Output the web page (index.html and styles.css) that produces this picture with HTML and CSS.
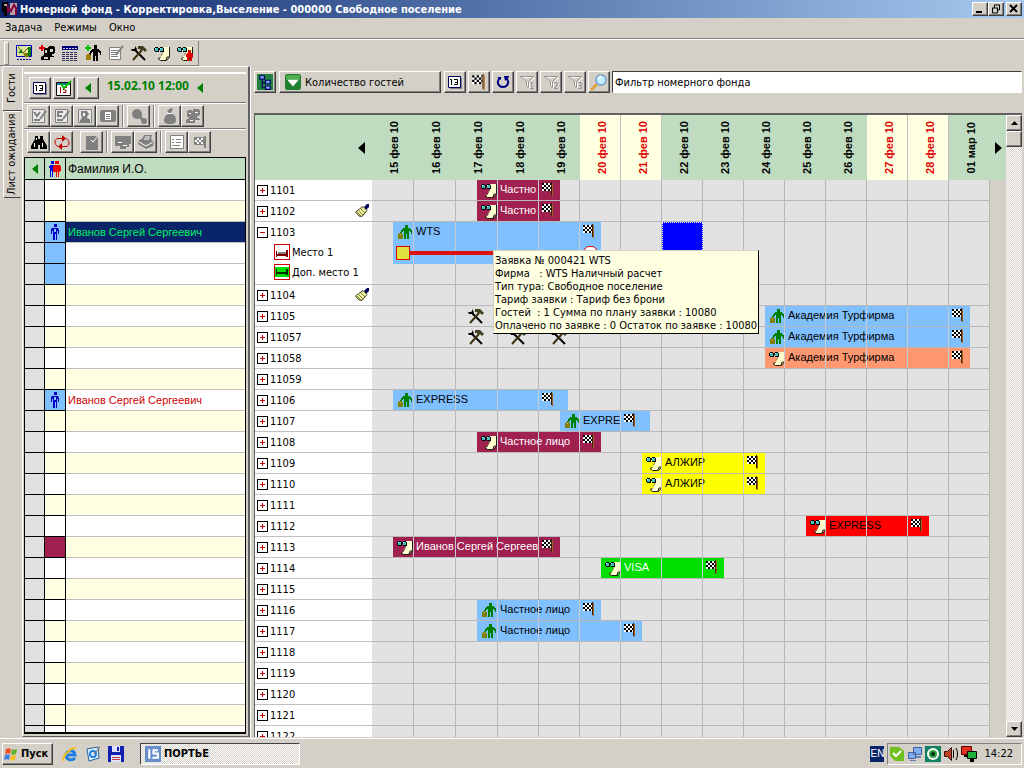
FILE: index.html
```html
<!DOCTYPE html>
<html lang="ru">
  <head>
    <meta charset="UTF-8" />
    <meta name="viewport" content="width=device-width, initial-scale=1.0" />
    <title>Номерной фонд</title>
    <link rel="stylesheet" href="styles.css">
  </head>
  <body>
    <svg class="sprite" width="0" height="0" aria-hidden="true">
      <symbol id="i-man" viewBox="0 0 16 16">
        <path fill="#008000" d="M8 1h3v3H8zM6 4h7v1h1v1h1v4h-1V8h-1V7h-1v8h-2v-5H9v5H7V7H6v1H5v2H3V8h1V6h1V5h1z" />
        <path fill="#808000" d="M1 10h1V9h3v1h1v5H1z" />
        <path fill="#c0c080" d="M3 10h1v1H3z" />
      </symbol>
      <symbol id="i-manadd" viewBox="0 0 16 16">
        <path fill="#000" d="M9 0h3v4H9zM7 4h7v1h1v1h1v4h-1V8h-1V7h-1v9h-2v-5h-1v5H8V7H7v1H6v2H4V8h1V6h1V5h1z" />
        <path fill="#00c000" d="M2 0h2v2h2v2H4v2H2V4H0V2h2z" />
        <path fill="#a08000" d="M1 10h1V9h3v1h1v5H1z" />
      </symbol>
      <symbol id="i-doc" viewBox="0 0 16 16">
        <path fill="#ffffd0" d="M8 2h7v10l-3 3H6l-2-2 3-1 2-4z" />
        <path fill="none" stroke="#202010" d="M15.500 2v10l-3 3.500h-6L4 13.500l2.500-1M12 15l1-3h2" />
        <path fill="none" stroke="#808060" d="M9 7.500l-2 3" />
        <path fill="#000" d="M1 2h3v1h2V2h3v1h1v4H6V5H5v2H1V6H0V3h1z" />
        <path fill="#40c0c0" d="M1 3h3v3H1zM6 3h3v3H6z" />
        <path fill="#c0ffff" d="M1 3h1v1H1zM6 3h1v1H6z" />
      </symbol>
      <symbol id="i-docman" viewBox="0 0 16 16">
        <use href="#i-doc" width="16" height="16" />
        <path fill="#e00000" d="M11 5h3v3h1v1h1v3h-1v4h-2v-3h-1v3h-2v-4H9V9h1V8h1z" />
      </symbol>
      <symbol id="i-flag" viewBox="0 0 12 14">
        <path fill="#fff" d="M0 1h9v8H0z" />
        <path fill="#000" d="M0 1h2v2H0zM4 1h2v2H4zM8 1h1v2H8zM2 3h2v2H2zM6 3h2v2H6zM0 5h2v2H0zM4 5h2v2H4zM8 5h1v2H8zM2 7h2v2H2zM6 7h2v2H6z" />
        <path fill="#402000" d="M9 0h1v13H9z" />
        <path fill="#a06020" d="M10 1h1v13h-1z" />
      </symbol>
      <symbol id="i-tools" viewBox="0 0 16 16">
        <path stroke="#000" stroke-width="2" d="M3 4l11 11" />
        <path stroke="#403010" stroke-width="2" d="M2 15L11 5" />
        <path fill="#404020" d="M7 1h5l4 4-2 2-2-2-2 1-1-2H7z" />
        <path fill="#000" d="M0 4l1 2h4l1-2-2-3v3H2z" />
      </symbol>
      <symbol id="i-brush" viewBox="0 0 16 16">
        <path fill="#000060" d="M10 4l3-3h2v3l-3 3z" />
        <path fill="#f0f0a0" stroke="#404020" d="M9 3.500l4 4-5 6-3-.5L1.500 9z" />
        <path stroke="#808040" d="M3 9l4 4M5 8l4 4M7 6l4 4" />
      </symbol>
      <symbol id="i-note" viewBox="0 0 16 16">
        <path fill="#fff" stroke="#808080" d="M1.500 2.500h11v12h-11z" />
        <path stroke="#808080" d="M3 5.500h7M3 7.500h6M3 9.500h5M3 11.500h7" />
        <path stroke="#808080" stroke-width="2" d="M15 1L8 10" />
      </symbol>
      <symbol id="i-notev" viewBox="0 0 16 16">
        <path fill="#e8e8e8" stroke="#808080" d="M1.500 1.500h12v13h-12z" />
        <path fill="none" stroke="#808080" stroke-width="2" d="M3 4l3 4 3-4M3 12h6M15 3l-6 8" />
      </symbol>
      <symbol id="i-notec" viewBox="0 0 16 16">
        <path fill="#e8e8e8" stroke="#808080" d="M1.500 1.500h12v13h-12z" />
        <path fill="none" stroke="#808080" stroke-width="2" d="M9 4H4v4h4M3 12h6M15 3l-6 8" />
      </symbol>
      <symbol id="i-cal" viewBox="0 0 16 16">
        <path fill="#808080" d="M3 4h12v11H3z" />
        <path fill="#fff" stroke="#000060" d="M1.500 2.500h12v11h-12z" />
        <path stroke="#000" fill="none" d="M3 5.500h1.500V11M7 5.500h3.500v5H7M8 8.500h2" />
      </symbol>
      <symbol id="i-calred" viewBox="0 0 18 18">
        <path fill="#fff" stroke="#000" d="M1.500 3.500h14v13h-14z" />
        <path fill="#008080" d="M2 4h13v2H2z" />
        <path stroke="#a00000" fill="none" d="M5.500 8v6M12 8.500H8.500V11H11v2.500H8" />
        <path stroke="#00c000" stroke-width="2" fill="none" d="M6 5l3 4 7-7" />
      </symbol>
      <symbol id="i-left" viewBox="0 0 6 10"><path fill="#008000" d="M6 0v10L0 5z" /></symbol>
      <symbol id="i-people" viewBox="0 0 16 16">
        <path fill="#808080" d="M3 2h4v1h1V1h6v1h1v5h-1v1h-2v2h2v1h1v1h-5v3H1v-3l3-2V9H2V3h1z" />
        <path fill="#fff" d="M4 5h2v1H4zM10 4h3v1h-3zM5 12h3v1H5z" />
      </symbol>
      <symbol id="i-peopleadd" viewBox="0 0 16 16">
        <path fill="#000" d="M5 3h4V2h1V1h5v1h1v6h-1v1h-2v2h2v1h-4v3H2v-3l3-2z" />
        <path fill="#d4d0c8" d="M6 5h2v3H6zM11 4h3v3h-3zM5 12h4v2H5z" />
        <path fill="#e00000" d="M2 0h2v2h2v2H4v2H2V4H0V2h2z" />
      </symbol>
      <symbol id="i-face" viewBox="0 0 16 16">
        <path fill="#e8e8e8" stroke="#808080" d="M1.500 1.500h13v13h-13z" />
        <path fill="#808080" d="M4 3h6l2 3-2 3v1l3 1v3H3v-2l2-2-1-3z" />
        <path fill="#fff" d="M6 5h2v3H6z" />
      </symbol>
      <symbol id="i-card" viewBox="0 0 16 14">
        <rect x="0" y="1" width="16" height="12" rx="2" fill="#808080" />
        <path fill="#fff" d="M5 3h6v8H5z" />
        <path stroke="#808080" d="M6 5.500h4M6 7.500h4M6 9.500h4" />
      </symbol>
      <symbol id="i-key" viewBox="0 0 16 16">
        <circle cx="6" cy="6" r="5" fill="#808080" />
        <path stroke="#808080" stroke-width="3" d="M8 8l4 4" />
        <circle cx="13" cy="13" r="3" fill="#808080" />
      </symbol>
      <symbol id="i-bag" viewBox="0 0 16 16">
        <path fill="#808080" d="M9 0l2 1-2 4c4 2 5 4 5 7s-2 4-6 4-6-1-6-4 2-5 5-7L5 3z" />
        <path stroke="#fff" d="M5 5.500h5" />
      </symbol>
      <symbol id="i-bino" viewBox="0 0 16 16">
        <path fill="#000" d="M4 2h3v3h2V2h3v3l4 7v3H9v-4H7v4H0v-3l4-7z" />
        <path fill="#fff" d="M3 9h1v4H3zM11 9h1v4h-1zM5 4h1v2H5z" />
      </symbol>
      <symbol id="i-loop" viewBox="0 0 16 16">
        <path fill="none" stroke="#c00000" d="M4 12.500C0 11 0 4.500 4 4.500h5M12 4.500c4 1 4 8 0 8H7" />
        <path fill="#c00000" d="M8 1l4 3.500L8 8zM8 9l-4 3.500L8 16z" />
      </symbol>
      <symbol id="i-check" viewBox="0 0 16 16">
        <path fill="#808080" d="M2 2h12v14H2z" />
        <path fill="none" stroke="#fff" d="M7 6l2 2 5-6" />
      </symbol>
      <symbol id="i-pay" viewBox="0 0 16 16">
        <path fill="#808080" d="M0 2h16v8h-2v3h-3v2H5v-3H0z" />
        <path stroke="#fff" d="M3 8.500h4M8 11.500h4" />
      </symbol>
      <symbol id="i-print" viewBox="0 0 16 16">
        <path fill="#808080" d="M6 1h8l-1 4 3 3-1 4-7 3-8-5 1-4 3-1z" />
        <path stroke="#fff" fill="none" d="M7 3h5M6 5h5M1 8l7 4 7-4" />
      </symbol>
      <symbol id="i-form" viewBox="0 0 16 16">
        <path fill="#fff" stroke="#808080" d="M1.500 1.500h13v13h-13z" />
        <path stroke="#808080" d="M3 5.500h2M7 5.500h5M3 8.500h2M7 8.500h5M3 11.500h8" />
      </symbol>
      <symbol id="i-flaggray" viewBox="0 0 16 16">
        <path fill="#fff" stroke="#808080" d="M2.500 3.500h9v7h-9z" />
        <path fill="#808080" d="M3 4h2v2H3zM7 4h2v2H7zM5 6h2v2H5zM9 6h2v2H9zM3 8h2v2H3zM7 8h2v2H7zM12 2h2v12h-2z" />
      </symbol>
      <symbol id="i-funnel" viewBox="0 0 14 14">
        <path fill="none" stroke="#fff" d="M1.500 2.500h13l-5 5v6l-2-2v-4z" />
        <path fill="none" stroke="#909090" d="M.5 1.500h13l-5 5v6l-2-2v-4z" />
      </symbol>
      <symbol id="i-shade" viewBox="0 0 16 16">
        <path fill="#e0e0a0" stroke="#0000c0" d="M.5.500h15v11H.5z" />
        <path stroke="#606000" d="M2 2l5 6 5-5" fill="none" />
        <path fill="#808000" d="M7 8h6v4H9z" />
        <path fill="#008000" d="M12 2h3v9h-3zM2 8l4-4v4z" />
        <path stroke="#000080" stroke-dasharray="2 1" d="M1 14.500h14" />
      </symbol>
      <symbol id="i-table" viewBox="0 0 16 16">
        <path fill="#000080" d="M0 1h16v4H0z" />
        <path stroke="#d4d0c8" stroke-dasharray="2 1" d="M1 3.500h14" />
        <path stroke="#303060" stroke-dasharray="3 1" d="M0 7.500h16M0 9.500h16M0 11.500h16M0 13.500h16M0 15.500h16" />
      </symbol>
      <symbol id="i-pair" viewBox="0 0 14 16">
        <path fill="#0000e0" d="M3 0h3v3H3zM2 4h4v5H5v7H4v-6H3v6H2V7H1V5h1z" />
        <path fill="#f00000" d="M7 0h4v3H7zM6 4h6l1 2v4h-1v1h-1v5h-1v-5H9v5H8v-5H5V6z" />
      </symbol>
      <symbol id="i-guest" viewBox="0 0 10 16">
        <path fill="#0000c0" d="M4 0h3v3H4zM2 4h6l1 2v4H8V7H7v9H6v-6H5v6H3V7H2v3H1V5z" />
        <path fill="#80c0ff" d="M4 5h2v3H4z" />
      </symbol>
      <symbol id="i-tree" viewBox="0 0 14 14">
        <path fill="#208040" d="M0 0h14v14H0z" />
        <path fill="#80b0ff" stroke="#000060" d="M2.500 1.500h4v3h-4zM7.500 5.500h4v3h-4zM7.500 10.500h4v3h-4z" />
        <path fill="none" stroke="#000060" d="M4.500 5v7h3M4.500 7.500h3" />
      </symbol>
      <symbol id="i-drop" viewBox="0 0 14 14">
        <rect width="14" height="14" rx="2" fill="#208030" />
        <path fill="#50b050" d="M1 1h12v4H1z" />
        <path fill="#fff" d="M2 5h10l-5 6z" />
      </symbol>
      <symbol id="i-turn" viewBox="0 0 16 16">
        <path fill="none" stroke="#000080" stroke-width="2" d="M5 4c-4 3-2 9 3 9s7-6 3-9" />
        <path fill="#000080" d="M9 2h5v1l-4 4zM2 3h4v3z" />
      </symbol>
      <symbol id="i-lens" viewBox="0 0 18 18">
        <path stroke="#e0a040" stroke-width="3" d="M1 17l6-6" />
        <circle cx="11" cy="7" r="5" fill="#c0f0ff" stroke="#80a8d0" stroke-width="2" />
        <path d="M8 6l3-3" stroke="#fff" stroke-width="2" />
      </symbol>
      <symbol id="i-app" viewBox="0 0 16 16">
        <path fill="#000" d="M0 1h6v4H4v2h3v4H5v4H2v-4H0z" />
        <path fill="#c0a0a0" d="M2 3h3v2H2zM8 2h7v12H8z" />
        <path fill="none" stroke="#800040" stroke-width="2" d="M6 12V6l3 4 3-6 2 3v7" />
      </symbol>
      <symbol id="i-bed" viewBox="0 0 14 10">
        <path fill="#800000" d="M1 4h1v3h9V3h2v7h-2V9H2v1H1z" />
        <path fill="#808080" d="M3 5h8v2H3z" />
      </symbol>
      <symbol id="i-addbed" viewBox="0 0 14 10">
        <path fill="#00e000" d="M0 0h14v10H0z" />
        <path fill="#003000" d="M1 2h1v3h9V2h2v6h-2V7H2v1H1z" />
      </symbol>
      <symbol id="i-win" viewBox="0 0 16 16">
        <path fill="#f05020" d="M3 3c2-1 3-1 5 0L7 8C5 7 4 7 2 8z" />
        <path fill="#60b030" d="M9 3c2 1 3 1 5 0l-1 5c-2 1-3 1-5 0z" />
        <path fill="#4080e0" d="M2 9c2-1 3-1 5 0l-1 5c-2-1-3-1-5 0z" />
        <path fill="#f8c020" d="M8 9c2 1 3 1 5 0l-1 5c-2 1-3 1-5 0z" />
      </symbol>
      <symbol id="i-ie" viewBox="0 0 16 16">
        <path fill="none" stroke="#2080e0" stroke-width="3" d="M13 12c-3 3-9 2-9-3s8-6 9 0H5" />
        <path fill="none" stroke="#f0c020" stroke-width="2" d="M2 15C-1 12 8 1 14 2" />
      </symbol>
      <symbol id="i-desk" viewBox="0 0 16 16">
        <path fill="#e0f0ff" stroke="#2060a0" d="M2 3l11-2 1 11-10 3z" />
        <circle cx="8" cy="8" r="3" fill="none" stroke="#2080e0" stroke-width="2" />
        <path stroke="#806040" d="M9 8l6-7" />
      </symbol>
      <symbol id="i-floppy" viewBox="0 0 16 16">
        <path fill="#1020b0" d="M0 0h16v16H0z" />
        <path fill="#e0e0ff" d="M4 0h8v6H4zM3 9h10v7H3z" />
        <path fill="#1020b0" d="M9 1h2v4H9z" />
        <path stroke="#c04040" d="M4 11.500h8M4 13.500h8" />
      </symbol>
      <symbol id="i-portier" viewBox="0 0 15 15">
        <path fill="#6890c8" d="M0 0h15v15H0z" />
        <path fill="none" stroke="#fff" stroke-width="2" d="M4 3v9M12 4H8v3h4v4H7" />
      </symbol>
      <symbol id="i-skype" viewBox="0 0 16 16">
        <path fill="#70c020" d="M1 1h9l5 4v10H6l-5-5z" />
        <path fill="none" stroke="#fff" stroke-width="2" d="M4 7l3 3 5-5" />
      </symbol>
      <symbol id="i-net" viewBox="0 0 16 16">
        <path fill="#80b0f0" stroke="#4060a0" d="M6.500 1.500h8v7h-8zM1.500 6.500h7v6h-7z" />
        <path fill="#6080b0" d="M9 10h5v2H9zM3 14h6v1H3z" />
      </symbol>
      <symbol id="i-eye" viewBox="0 0 16 16">
        <path fill="#108060" d="M0 0h16v16H0z" />
        <circle cx="8" cy="8" r="6" fill="#fff" />
        <circle cx="8" cy="8" r="4" fill="#30a040" />
        <circle cx="8" cy="8" r="2" fill="#003020" />
      </symbol>
      <symbol id="i-sound" viewBox="0 0 14 16">
        <path fill="#c04020" stroke="#301010" d="M.5 5.500h3l4-4v13l-4-4h-3z" />
        <path fill="none" stroke="#000" d="M9.500 4v8M12 2c2 3 2 9 0 12" />
      </symbol>
      <symbol id="i-screens" viewBox="0 0 16 16">
        <path fill="#e03020" stroke="#600" d="M.5.500h10v8H.5z" />
        <path fill="#20b040" stroke="#000" d="M6.500 5.500h9v7h-9z" />
        <path fill="#000" d="M9 13h4v3H9zM3 9h3v2H3z" />
      </symbol>
    </svg>

    <header class="titlebar">
      <svg class="ico"><use href="#i-app" /></svg>
      <h1>Номерной фонд - Корректировка,Выселение - 000000 Свободное поселение</h1>
      <div class="winbtns">
        <button class="btn" aria-label="Свернуть"><svg viewBox="0 0 12 10"><path fill="#000" d="M2 7h6v2H2z" /></svg></button>
        <button class="btn" aria-label="Восстановить"><svg viewBox="0 0 12 10"><path fill="none" stroke="#000" d="M4 1h6M4.500 1v3M9.500 1v5H8M2 4h6M2.500 4v5h5V4" /></svg></button>
        <button class="btn close" aria-label="Закрыть"><svg viewBox="0 0 12 10"><path stroke="#000" stroke-width="2" d="M2 1l7 7M9 1L2 8" /></svg></button>
      </div>
    </header>

    <nav class="menu">
      <button>Задача</button>
      <button>Режимы</button>
      <button>Окно</button>
    </nav>

    <div class="toolbar">
      <button aria-label="Шахматка"><svg class="ico"><use href="#i-shade" /></svg></button>
      <button aria-label="Новая группа"><svg class="ico"><use href="#i-peopleadd" /></svg></button>
      <button aria-label="Таблица"><svg class="ico"><use href="#i-table" /></svg></button>
      <button aria-label="Новый гость"><svg class="ico"><use href="#i-manadd" /></svg></button>
      <button aria-label="Правка"><svg class="ico"><use href="#i-note" /></svg></button>
      <button aria-label="Ремонт"><svg class="ico"><use href="#i-tools" /></svg></button>
      <button aria-label="Заявки"><svg class="ico"><use href="#i-doc" /></svg></button>
      <button aria-label="Заявки гостя"><svg class="ico"><use href="#i-docman" /></svg></button>
    </div>

    <main class="work">
      <div class="tabs">
        <button class="tab active">Гости</button>
        <button class="tab">Лист ожидания</button>
      </div>

      <section class="guests">
        <div class="tools first">
          <button class="btn" aria-label="Дата"><svg class="ico"><use href="#i-cal" /></svg></button>
          <button class="btn" aria-label="Сегодня"><svg class="ico big"><use href="#i-calred" /></svg></button>
          <button class="btn" aria-label="Назад"><svg class="arrow"><use href="#i-left" /></svg></button>
          <time class="now">15.02.10 12:00</time>
          <svg class="arrow"><use href="#i-left" /></svg>
        </div>
        <div class="tools">
          <button class="btn" aria-label="Въезд"><svg class="ico"><use href="#i-notev" /></svg></button>
          <button class="btn" aria-label="Счет"><svg class="ico"><use href="#i-notec" /></svg></button>
          <button class="btn" aria-label="Анкета"><svg class="ico"><use href="#i-face" /></svg></button>
          <button class="btn" aria-label="Карта"><svg class="ico"><use href="#i-card" /></svg></button>
          <i class="sep"></i>
          <button class="btn" aria-label="Ключ"><svg class="ico"><use href="#i-key" /></svg></button>
          <i class="sep"></i>
          <button class="btn" aria-label="Оплата"><svg class="ico"><use href="#i-bag" /></svg></button>
          <button class="btn" aria-label="Группа"><svg class="ico"><use href="#i-people" /></svg></button>
        </div>
        <div class="tools">
          <button class="btn" aria-label="Поиск"><svg class="ico"><use href="#i-bino" /></svg></button>
          <button class="btn" aria-label="Обновить"><svg class="ico"><use href="#i-loop" /></svg></button>
          <i class="space"></i>
          <button class="btn" aria-label="Отметить"><svg class="ico"><use href="#i-check" /></svg></button>
          <i class="sep"></i>
          <button class="btn" aria-label="Касса"><svg class="ico"><use href="#i-pay" /></svg></button>
          <button class="btn" aria-label="Печать"><svg class="ico"><use href="#i-print" /></svg></button>
          <i class="sep"></i>
          <button class="btn" aria-label="Бланк"><svg class="ico"><use href="#i-form" /></svg></button>
          <button class="btn" aria-label="Выезд"><svg class="ico"><use href="#i-flaggray" /></svg></button>
        </div>
        <div class="guestlist">
          <table>
            <thead>
              <tr>
                <th class="mark"><svg class="arrow"><use href="#i-left" /></svg></th>
                <th class="sex"><svg class="ico"><use href="#i-pair" /></svg></th>
                <th class="name">Фамилия И.О.</th>
              </tr>
            </thead>
            <tbody id="guestRows"></tbody>
          </table>
        </div>
      </section>

      <section class="fund">
        <div class="fundbar">
          <button class="btn" aria-label="Дерево"><svg class="ico"><use href="#i-tree" /></svg></button>
          <button class="btn mode"><svg class="ico"><use href="#i-drop" /></svg>Количество гостей</button>
          <button class="btn" aria-label="Дата"><svg class="ico"><use href="#i-cal" /></svg></button>
          <button class="btn" aria-label="Выезд"><svg class="ico"><use href="#i-flag" /></svg></button>
          <button class="btn" aria-label="Обновить"><svg class="ico"><use href="#i-turn" /></svg></button>
          <button class="btn funnel" aria-label="Фильтр 1"><svg class="ico"><use href="#i-funnel" /></svg><sub>1</sub></button>
          <button class="btn funnel" aria-label="Фильтр 2"><svg class="ico"><use href="#i-funnel" /></svg><sub>2</sub></button>
          <button class="btn funnel" aria-label="Фильтр 3"><svg class="ico"><use href="#i-funnel" /></svg><sub>3</sub></button>
          <button class="btn" aria-label="Найти"><svg class="ico big"><use href="#i-lens" /></svg></button>
          <input class="filter" type="text" aria-label="Фильтр" value="Фильтр номерного фонда" />
        </div>

        <div class="chart">
          <div class="plan">
            <div class="head">
              <div class="corner"><button aria-label="Раньше"><svg viewBox="0 0 7 12"><path d="M7 0v12L0 6z" /></svg></button></div>
              <div class="days" id="dates"></div>
              <div class="rest"><button aria-label="Позже"><svg viewBox="0 0 7 12"><path d="M0 0v12l7-6z" /></svg></button></div>
            </div>
            <div class="rooms" id="rooms"></div>
          </div>
          <div class="scroll">
            <button class="btn" aria-label="Вверх"><svg viewBox="0 0 7 4"><path d="M0 4h7L3.500 0z" /></svg></button>
            <div class="btn thumb"></div>
            <button class="btn down" aria-label="Вниз"><svg viewBox="0 0 7 4"><path d="M0 0h7L3.500 4z" /></svg></button>
          </div>
        </div>
      </section>
    </main>

    <footer class="taskbar">
      <button class="btn start"><svg class="ico"><use href="#i-win" /></svg>Пуск</button>
      <div class="quick">
        <svg class="ico"><use href="#i-ie" /></svg>
        <svg class="ico"><use href="#i-desk" /></svg>
        <svg class="ico"><use href="#i-floppy" /></svg>
      </div>
      <button class="task"><svg class="ico"><use href="#i-portier" /></svg>ПОРТЬЕ</button>
      <span class="lang">EN</span>
      <div class="tray">
        <svg class="ico"><use href="#i-skype" /></svg>
        <svg class="ico"><use href="#i-net" /></svg>
        <svg class="ico"><use href="#i-eye" /></svg>
        <svg class="ico"><use href="#i-sound" /></svg>
        <svg class="ico"><use href="#i-screens" /></svg>
        <time>14:22</time>
      </div>
    </footer>
    <script src="main.js"></script>
  </body>
</html>
```
FILE: styles.css
```css
* {
  box-sizing: border-box;
}
body {
  margin: 0;
  height: 100vh;
  display: flex;
  flex-direction: column;
  overflow: hidden;
  background-color: #d4d0c8;
  color: #000;
  font-family: "DejaVu Sans Condensed", "Liberation Sans", sans-serif;
  font-size: 11px;
}
button {
  margin: 0;
  padding: 0;
  border: 0;
  background: none;
  color: inherit;
  font: inherit;
}
.sprite {
  position: absolute;
}
.ico {
  width: 16px;
  height: 16px;
  flex: none;
}
.big {
  width: 18px;
  height: 18px;
}
.arrow {
  width: 6px;
  height: 10px;
  flex: none;
}
.btn {
  display: flex;
  align-items: center;
  justify-content: center;
  flex: none;
  width: 22px;
  height: 22px;
  border: 1px solid;
  border-color: #fff #404040 #404040 #fff;
  box-shadow: inset -1px -1px #808080;
  background-color: #d4d0c8;
}

/* title */
.titlebar {
  display: flex;
  align-items: center;
  flex: none;
  height: 18px;
  padding: 0 2px;
  background: linear-gradient(to right, #0a246a, #a6caf0);
  color: #fff;
}
.titlebar h1 {
  flex: 1;
  margin: 0 0 0 2px;
  font-size: 11px;
  font-weight: bold;
  white-space: nowrap;
}
.winbtns {
  display: flex;
}
.winbtns .btn {
  width: 16px;
  height: 14px;
}
.winbtns .close {
  margin-left: 2px;
}
.winbtns svg {
  width: 12px;
  height: 10px;
}

/* menu */
.menu {
  display: flex;
  flex: none;
  gap: 12px;
  height: 22px;
  padding-left: 5px;
  padding-bottom: 2px;
  border-bottom: 1px solid #fff;
  box-shadow: inset 0 -1px #808080;
}
.toolbar {
  display: flex;
  align-items: center;
  align-self: flex-start;
  flex: none;
  height: 25px;
  margin-top: 1px;
  padding: 0 2px 0 8px;
  border-right: 1px solid #808080;
  border-bottom: 1px solid #808080;
}
.toolbar::before {
  content: "";
  width: 3px;
  height: 21px;
  margin-left: -4px;
  margin-right: 3px;
  border: 1px solid;
  border-color: #fff #808080 #808080 #fff;
}
.toolbar button {
  display: flex;
  align-items: center;
  justify-content: center;
  width: 23px;
  height: 22px;
}

.work {
  display: flex;
  flex: 1;
  min-height: 0;
}

/* tabs */
.tabs {
  display: flex;
  flex-direction: column;
  flex: none;
  width: 22px;
  padding-left: 2px;
}
.tab {
  width: 18px;
  height: 87px;
  margin-left: 1px;
  border: 1px solid;
  border-color: #404040 #fff #fff transparent;
  border-radius: 0 3px 3px 0;
  line-height: 16px;
  white-space: nowrap;
  writing-mode: vertical-rl;
  transform: rotate(180deg);
}
.tab.active {
  width: 20px;
  height: 45px;
  margin-left: 0;
}

/* guests */
.guests {
  display: flex;
  flex-direction: column;
  flex: 0 1 228px;
  min-width: 200px;
  padding: 5px 2px 2px 1px;
  border: 1px solid #fff;
  border-right: 2px solid #606060;
  border-bottom: 1px solid #606060;
}
.tools {
  display: flex;
  align-items: center;
  flex: none;
  height: 26px;
  padding-left: 3px;
  border-top: 1px solid #808080;
  box-shadow: inset 0 1px #fff;
}
.tools .btn {
  width: 23px;
  margin-top: 1px;
}
.tools.first {
  height: 30px;
  gap: 2px;
  padding-left: 5px;
  border-top: 1px solid #fff;
}
.tools.first .btn {
  width: 22px;
}
.tools .sep {
  width: 2px;
  height: 22px;
  margin: 0 3px;
  border-left: 1px solid #808080;
  border-right: 1px solid #fff;
}
.tools .space {
  width: 7px;
}
.now {
  margin: 0 6px 4px;
  color: #008000;
  font-family: "Noto Sans", sans-serif;
  font-size: 12px;
  font-weight: bold;
  white-space: nowrap;
}
.guestlist {
  flex: 1;
  min-height: 0;
  margin-top: 3px;
  border: 1px solid #000;
  border-bottom-width: 2px;
  overflow: hidden;
  background-color: #fff;
}
.guestlist table {
  width: 100%;
  border-collapse: separate;
  border-spacing: 0;
  table-layout: fixed;
}
.guestlist th,
.guestlist td {
  height: 21px;
  padding: 0;
  border-right: 1px solid #000;
  border-bottom: 1px solid #000;
  font-size: 11px;
  font-weight: normal;
  line-height: 12px;
  text-align: left;
  white-space: nowrap;
}
.guestlist th {
  height: 22px;
  background-color: #c0dcc0;
}
.guestlist .mark {
  width: 20px;
}
.guestlist .sex {
  width: 21px;
}
.guestlist .mark,
.guestlist .sex {
  text-align: center;
}
.guestlist svg {
  display: block;
  margin: 0 auto;
}
.guestlist .name {
  padding-left: 2px;
  border-right: 0;
}
.guestlist th.name {
  font-family: "Liberation Sans", sans-serif;
  font-size: 12px;
}
.guestlist td.name {
  border-bottom-color: #c0c0c0;
  font-family: "Liberation Sans", sans-serif;
}
.guestlist td.mark {
  background-color: #e0e0e0;
}
.odd td {
  background-color: #ffffe1;
}
.guestlist .blue {
  background-color: #80c0ff;
}
.guestlist .wine {
  background-color: #a02050;
}
.guestlist .current {
  background-color: #0a246a;
  color: #00f060;
}
.guestlist .late {
  color: #d00000;
}

/* fund */
.fund {
  display: flex;
  flex-direction: column;
  flex: 1;
  min-width: 0;
  padding: 5px 2px 0 3px;
  border-left: 1px solid #fff;
}
.fundbar {
  display: flex;
  flex: none;
  gap: 2px;
  height: 22px;
}
.fundbar .mode {
  flex: 0 1 162px;
  justify-content: flex-start;
  gap: 4px;
  margin: 0 1px;
  padding-left: 5px;
  white-space: nowrap;
}
.funnel {
  position: relative;
}
.funnel .ico {
  width: 14px;
  height: 14px;
}
.funnel sub {
  position: absolute;
  right: 3px;
  bottom: 1px;
  color: #808080;
  font-size: 8px;
  line-height: 8px;
}
.filter {
  flex: 1;
  min-width: 0;
  margin: 0;
  padding: 0 2px;
  border: 1px solid;
  border-color: #404040 #fff #fff #404040;
  background-color: #fff;
  font: inherit;
}
.chart {
  display: flex;
  flex: 1;
  min-height: 0;
  margin-top: 20px;
  border-top: 2px solid #606060;
  border-left: 1px solid #606060;
}
.plan {
  display: flex;
  flex-direction: column;
  flex: 1;
  min-width: 0;
}
.head,
.room {
  display: grid;
  grid-template-columns: 117px 1fr 16px;
}
.head {
  flex: none;
  height: 65px;
  background-color: #c0dcc0;
}
.corner,
.rest {
  display: flex;
  align-items: center;
}
.corner {
  justify-content: flex-end;
  padding-right: 7px;
}
.rest {
  justify-content: center;
}
.head button svg {
  display: block;
  width: 7px;
  height: 12px;
}
.days {
  display: grid;
  grid-template-columns: repeat(3, 42fr) repeat(12, 41fr);
  position: relative;
}
.date {
  display: flex;
  align-items: center;
  justify-content: center;
  padding-left: 3px;
  border-right: 1px solid transparent;
  font-family: "Liberation Sans", sans-serif;
  font-weight: bold;
  line-height: 12px;
}
.date span {
  writing-mode: vertical-rl;
  transform: rotate(180deg);
  white-space: nowrap;
}
.date.holiday {
  border-right-color: #c0c0c0;
  background-color: #ffffe1;
  color: #e00000;
}
.rooms {
  flex: 1;
  min-height: 0;
  overflow: hidden;
}
.room {
  height: 21px;
}
.room.open {
  height: 63px;
}
.label {
  border-bottom: 1px solid #c0c0c0;
  background-color: #fff;
}
.line {
  display: flex;
  align-items: center;
  height: 20px;
  padding: 0 2px;
}
.line .ico {
  margin-left: auto;
}
.toggle {
  width: 11px;
  height: 11px;
  margin-right: 2px;
  border: 1px solid #000;
  background-color: #fff;
}
.toggle svg {
  display: block;
  width: 9px;
  height: 9px;
}
.place {
  display: flex;
  align-items: center;
  gap: 2px;
  height: 20px;
  padding-left: 19px;
}
.place span {
  display: flex;
  align-items: center;
  justify-content: center;
  width: 16px;
  height: 16px;
  border: 1px solid #d00000;
}
.place svg {
  width: 14px;
  height: 10px;
}
.cell {
  border-right: 1px solid #b8b8b8;
  border-bottom: 1px solid #b8b8b8;
  background-color: #e2e2e2;
}
.cell .ico {
  display: block;
  margin: 2px 0 0 12px;
}
.selected {
  height: 40px;
  border: 1px dotted #fff;
  background-color: #0000ff;
}

/* bars lie over the day cells */
.bar {
  position: absolute;
  top: 0;
  height: 20px;
  font-family: "Liberation Sans", sans-serif;
  font-size: 11px;
  line-height: 19px;
}
.bar.tall {
  height: 42px;
}
.bar .ico {
  position: absolute;
  top: 2px;
  left: 4px;
}
.bar .text {
  position: absolute;
  left: 23px;
  overflow: hidden;
  white-space: nowrap;
}
.bar .flag {
  position: absolute;
  top: 2px;
  width: 12px;
  height: 14px;
  margin-left: 3px;
}
.bar .tick {
  position: absolute;
  top: 0;
  bottom: 0;
  width: 1px;
  background-color: #c8ccd0;
}
.bar.blue {
  background-color: #80c0ff;
}
.bar.wine {
  background-color: #a02050;
  color: #fff;
}
.bar.orange {
  background-color: #ff9870;
}
.bar.yellow {
  background-color: #ffff00;
}
.bar.red {
  background-color: #ff0000;
}
.bar.green {
  background-color: #00e000;
  color: #fff;
}
.stay {
  position: absolute;
  top: 24px;
  left: 3px;
  right: 4px;
  display: flex;
  align-items: center;
}
.stay .from {
  width: 14px;
  height: 14px;
  border: 1px solid #e00000;
  background-color: #e0e040;
}
.stay .way {
  flex: 1;
  height: 4px;
  background-color: #e01010;
}
.stay .to {
  width: 13px;
  height: 14px;
  border: 1px solid #e00000;
  border-radius: 5px;
  background-color: #fff;
}
.hint {
  position: absolute;
  top: 28px;
  z-index: 2;
  padding: 3px 1px 1px;
  border: 1px solid;
  border-color: #d4d0c8 #000 #000 #d4d0c8;
  background-color: #ffffe1;
  line-height: 13px;
  white-space: pre;
}

/* scroll */
.scroll {
  display: flex;
  flex-direction: column;
  flex: none;
  width: 16px;
  background: conic-gradient(#fff 25%, #d4d0c8 0 50%, #fff 0 75%, #d4d0c8 0) 0 0 / 2px 2px;
}
.scroll .btn {
  width: 16px;
  height: 16px;
}
.scroll svg {
  width: 7px;
  height: 4px;
}
.scroll .down {
  margin-top: auto;
}

/* taskbar */
.taskbar {
  display: flex;
  align-items: center;
  flex: none;
  height: 31px;
  padding: 1px 2px 0;
  border-top: 1px solid #d4d0c8;
  box-shadow: inset 0 1px #fff;
}
.start {
  justify-content: flex-start;
  gap: 2px;
  width: 51px;
  font-weight: bold;
}
.quick {
  display: flex;
  gap: 7px;
  margin: 0 16px 0 9px;
}
.task {
  display: flex;
  align-items: center;
  flex: 0 1 160px;
  gap: 3px;
  height: 22px;
  padding-left: 4px;
  border: 1px solid;
  border-color: #404040 #fff #fff #404040;
  background: conic-gradient(#fff 25%, #d4d0c8 0 50%, #fff 0 75%, #d4d0c8 0) 0 0 / 2px 2px;
  font-weight: bold;
}
.lang {
  width: 14px;
  height: 16px;
  margin-left: auto;
  margin-right: 3px;
  background-color: #0a246a;
  color: #fff;
  font-family: "Liberation Sans", sans-serif;
  font-size: 10px;
  line-height: 16px;
}
.tray {
  display: flex;
  align-items: center;
  gap: 2px;
  height: 22px;
  padding: 0 8px 0 1px;
  border: 1px solid;
  border-color: #808080 #fff #fff #808080;
}
.tray time {
  margin-left: 5px;
}
```
FILE: main.js
```js
// ширина дня в шахматке
var widths = [42, 42, 42, 41, 41, 41, 41, 41, 41, 41, 41, 41, 41, 41, 41];
var total = 618;
var dates = ["15 фев 10", "16 фев 10", "17 фев 10", "18 фев 10", "19 фев 10", "20 фев 10", "21 фев 10", "22 фев 10",
  "23 фев 10", "24 фев 10", "25 фев 10", "26 фев 10", "27 фев 10", "28 фев 10", "01 мар 10"];
var holidays = [5, 6, 12, 13];

var hint = "Заявка № 000421 WTS\n" +
  "Фирма   : WTS Наличный расчет\n" +
  "Тип тура: Свободное поселение\n" +
  "Тариф заявки : Тариф без брони\n" +
  "Гостей  : 1 Сумма по плану заявки : 10080\n" +
  "Оплачено по заявке : 0 Остаток по заявке : 10080";

// bar: [начало, конец, цвет, иконка, текст]
var rooms = [
  { no: "1101", bar: [2.5, 4.5, "wine", "doc", "Частно"] },
  { no: "1102", brush: true, bar: [2.5, 4.5, "wine", "doc", "Частно"] },
  { no: "1103", open: true, bar: [0.5, 5.5, "blue", "man", "WTS"] },
  { no: "1104", brush: true },
  { no: "1105", repair: [2], bar: [9.5, 14.5, "blue", "man", "Академия Турфирма"] },
  { no: "11057", repair: [2, 3, 4], bar: [9.5, 14.5, "blue", "man", "Академия Турфирма"] },
  { no: "11058", bar: [9.5, 14.5, "orange", "doc", "Академия Турфирма"] },
  { no: "11059" },
  { no: "1106", bar: [0.5, 4.7, "blue", "man", "EXPRESS"] },
  { no: "1107", bar: [4.5, 6.7, "blue", "man", "EXPRES"] },
  { no: "1108", bar: [2.5, 5.5, "wine", "doc", "Частное лицо"] },
  { no: "1109", bar: [6.5, 9.5, "yellow", "doc", "АЛЖИР"] },
  { no: "1110", bar: [6.5, 9.5, "yellow", "doc", "АЛЖИР"] },
  { no: "1111" },
  { no: "1112", bar: [10.5, 13.5, "red", "doc", "EXPRESS"] },
  { no: "1113", bar: [0.5, 4.5, "wine", "doc", "Иванов Сергей Сергеев"] },
  { no: "1114", bar: [5.5, 8.5, "green", "doc", "VISA"] },
  { no: "1115" },
  { no: "1116", bar: [2.5, 5.5, "blue", "man", "Частное лицо"] },
  { no: "1117", bar: [2.5, 6.5, "blue", "man", "Частное лицо"] },
  { no: "1118" },
  { no: "1119" },
  { no: "1120" },
  { no: "1121" },
  { no: "1122" }
];

function icon(name, cls) {
  return '<svg class="' + (cls || "ico") + '"><use href="#i-' + name + '" /></svg>';
}

// позиция дня от левого края
function offset(day) {
  var sum = 0;
  var whole = Math.floor(day);
  for (var i = 0; i < whole; i++) {
    sum += widths[i];
  }
  return Math.round(sum + (day - whole) * (widths[whole] || 0));
}

function percent(part, all) {
  return (part / all) * 100 + "%";
}

function drawBar(room) {
  var b = room.bar;
  var left = offset(b[0]);
  var width = offset(b[1]) - left;
  var last = offset(Math.floor(b[1])) - left;
  var html = '<div class="bar ' + b[2] + (room.open ? " tall" : "") +
    '" style="left:' + percent(left, total) + ";width:" + percent(width, total) + '">';
  html += icon(b[3]);
  html += '<span class="text" style="right:' + percent(width - last, width) + '">' + b[4] + "</span>";
  for (var d = Math.ceil(b[0]); d < b[1]; d++) {
    html += '<i class="tick" style="left:' + percent(offset(d) - left - 1, width) + '"></i>';
  }
  html += '<svg class="flag" style="left:' + percent(last, width) + '"><use href="#i-flag" /></svg>';
  if (room.open) {
    html += '<div class="stay"><i class="from"></i><i class="way"></i><i class="to"></i></div>';
  }
  return html + "</div>";
}

function drawRoom(room) {
  var sign = room.open ? "M2 4.500h5" : "M2 4.500h5M4.500 2v5";
  var html = '<div class="room' + (room.open ? " open" : "") + '"><div class="label"><div class="line">' +
    '<button class="toggle" aria-label="' + room.no + '"><svg viewBox="0 0 9 9"><path stroke="#d00000" d="' + sign + '" /></svg></button>' +
    room.no + (room.brush ? icon("brush") : "") + "</div>";
  if (room.open) {
    html += '<div class="place"><span>' + icon("bed", "bed") + "</span>Место 1</div>";
    html += '<div class="place"><span>' + icon("addbed", "bed") + "</span>Доп. место 1</div>";
  }
  html += '</div><div class="days">';
  for (var i = 0; i < widths.length; i++) {
    var fix = room.repair && room.repair.indexOf(i) >= 0;
    var sel = room.open && i == 7;
    html += '<div class="cell' + (sel ? " selected" : "") + '">' + (fix ? icon("tools") : "") + "</div>";
  }
  if (room.bar) {
    html += drawBar(room);
  }
  if (room.open) {
    html += '<div class="hint" style="left:' + percent(121, total) + '">' + hint + "</div>";
  }
  return html + "</div></div>";
}

document.getElementById("dates").innerHTML = dates.map(function (text, i) {
  return '<div class="date' + (holidays.indexOf(i) >= 0 ? " holiday" : "") + '"><span>' + text + "</span></div>";
}).join("");
document.getElementById("rooms").innerHTML = rooms.map(drawRoom).join("");

// список гостей
var guests = {
  2: { sex: "blue", name: "Иванов Сергей Сергеевич", state: "current" },
  3: { sex: "blue" },
  4: { sex: "blue" },
  10: { sex: "blue", name: "Иванов Сергей Сергеевич", state: "late" },
  17: { sex: "wine" }
};
var list = "";
for (var i = 0; i < 27; i++) {
  var g = guests[i] || {};
  list += '<tr class="' + (i % 2 == 1 && i != 3 ? "odd" : "") + '"><td class="mark"></td>' +
    '<td class="sex ' + (g.sex || "") + '">' + (g.name ? icon("guest") : "") + "</td>" +
    '<td class="name ' + (g.state || "") + '">' + (g.name || "") + "</td></tr>";
}
document.getElementById("guestRows").innerHTML = list;
```
